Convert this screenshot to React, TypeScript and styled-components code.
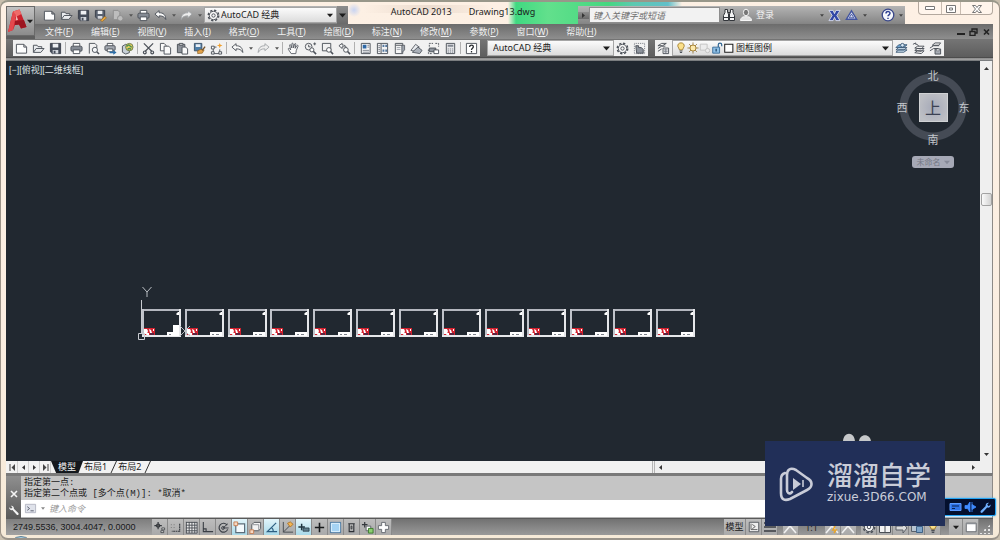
import React from "react";
import styled, { createGlobalStyle, css } from "styled-components";

const ui = `"Noto Sans", "Noto Sans CJK SC", sans-serif`;
const mono = `"Liberation Mono", "Noto Sans CJK SC", monospace`;

const GlobalStyle = createGlobalStyle`
  * { box-sizing: border-box; }
  html, body { margin: 0; padding: 0; }
  body { background: #c9bfae; font-family: ${ui}; font-size: 9px; line-height: 12px; color: #1c1c1c; }
  button, input, select { font: inherit; color: inherit; margin: 0; padding: 0; border: 0; background: none; border-radius: 0; }
  svg { display: block; flex: none; }
`;

/* ---------- icons ---------- */

const K = "#4c5159";
const line = { fill: "none", stroke: K, strokeWidth: 1 };

const glyphs: Record<string, React.ReactNode> = {
  new: <path d="M1.5 2.5h8l3 3v6.500h-11z M9.500 2.500v3h3" fill="#fdfdfd" stroke={K} />,
  open: (
    <g fill="#e9ebee" stroke={K}>
      <path d="M1.500 11V3.500h4l1 1.500h4v2" />
      <path d="M1.500 11.200 4.500 7h8.500L9.500 11.200z" />
    </g>
  ),
  save: (
    <g>
      <path d="M1.500 1.500h11v11h-9l-2-2z" fill="#454c59" stroke="#3a404b" />
      <path d="M4 2h6v4H4z" fill="#eef0f3" />
      <path d="M4 8.500h6v4H4z" fill="#d5d8de" />
      <path d="M5 9.500h2v3H5z" fill="#454c59" />
    </g>
  ),
  saveAs: (
    <g>
      <path d="M1.500 1.500h10v9h-8l-2-2z" fill="#5a6270" stroke="#3a404b" />
      <path d="M4 2h5v3.500H4z" fill="#eef0f3" />
      <path d="M4 7.500h5v3H4z" fill="#d5d8de" />
      <path d="M7 12.500 11.500 8l2 1.500-4.500 4z" fill="#e9a63e" stroke="#93641c" strokeWidth=".6" />
    </g>
  ),
  cloud: (
    <g stroke="#8d8d8d" fill="#bdbdbd">
      <path d="M2.500 1.500h5l2 2v8h-7z" />
      <circle cx="10" cy="10" r="3" />
    </g>
  ),
  print: (
    <g stroke={K}>
      <path d="M3.500 5V1.500h7V5" fill="#fff" />
      <rect x="1" y="4.500" width="12" height="5.500" rx="1.500" fill="#858b94" />
      <path d="M3.500 8.500h7v4h-7z" fill="#fff" />
    </g>
  ),
  preview: (
    <g>
      <path d="M2.500 12.500v-11h6l2 2v3" {...line} />
      <circle cx="8.500" cy="8.500" r="2.800" fill="#f4f6f8" stroke={K} />
      <path d="m10.500 10.500 2.500 2.500" stroke={K} strokeWidth="1.600" />
    </g>
  ),
  publish: (
    <g stroke={K}>
      <path d="M3.500 4V1.500h6V4" fill="#fff" />
      <rect x="1" y="4" width="11" height="5" rx="1" fill="#a3a8b0" />
      <path d="M3.500 7.500h6v3h-6z" fill="#fff" />
      <path d="M6 10.200h4V8.500l3.500 2.700L10 13.800v-1.700H6z" fill="#2c6ea8" stroke="none" />
    </g>
  ),
  globe: (
    <g>
      <path d="M1.500 4.500 5 2.500l4 1v8l-4 1.500-3.500-2z" fill="#c8d0d8" stroke={K} />
      <circle cx="9" cy="5.500" r="4" fill="#e8cf5e" stroke="#6b7a4e" />
      <path d="M6 5q2-3 3.500-1T12 5M7 8q2-2 4 0" fill="none" stroke="#4f9150" strokeWidth="1.400" />
    </g>
  ),
  cut: (
    <g {...line} strokeWidth="1.300">
      <path d="M2 1.500 10.500 10M12 1.500 3.500 10" />
      <circle cx="3" cy="11.200" r="1.500" />
      <circle cx="11" cy="11.200" r="1.500" />
    </g>
  ),
  copy: (
    <g fill="#fafafa" stroke={K}>
      <path d="M1.500 1.500h4l2 2v6h-6z" />
      <path d="M5.500 4.500h5l2 2v6.500h-7z" />
    </g>
  ),
  paste: (
    <g stroke={K}>
      <path d="M1.500 2.500h8v9h-8z" fill="#8b9098" />
      <path d="M3.500 1.500h4v2h-4z" fill="#d9d9d9" />
      <path d="M6.500 5.500h4l2 2v5.500h-6z" fill="#fafafa" />
    </g>
  ),
  match: (
    <g>
      <path d="M1.500 1.500h8v8h-8z" fill="#4e7ea8" stroke="#3b5066" />
      <path d="M3 2.500h5v3H3z" fill="#e8eef4" />
      <path d="M5 9.500 8 8l4 .5-2 3.500-5 .5z" fill="#e2a24a" stroke="#8a5f20" strokeWidth=".7" />
      <path d="m10 9 3-4" stroke="#75532a" strokeWidth="1.500" />
    </g>
  ),
  block: (
    <g>
      <path d="M3 12.500h8M3.500 6v5M10.500 8v3M4 5.500h3" {...line} />
      <path d="M1.500 4.500h3v3h-3zM1.500 10.500h3v2.500h-3zM9.500 10.500h3v2.500h-3z" fill="#fff" stroke={K} />
      <path d="m10.500 1 .8 2 2.200.8-2.200.9-.8 2.100-.8-2.100-2.200-.9 2.200-.8z" fill="#f0a02e" />
    </g>
  ),
  undo: <path d="M1 5.500 5.500 1.800v2.300c4.500-.2 7 2 7.200 7.200C11 8.200 9 7.300 5.500 7.400v2z" fill="#fafafa" stroke={K} />,
  redo: <path d="M13 5.500 8.500 1.800v2.300C4 3.900 1.500 6.100 1.300 11.300 3 8.200 5 7.300 8.500 7.400v2z" fill="#ededed" stroke="#a2a5a9" />,
  hand: (
    <path
      d="M4.500 12.500 1.500 8c-.6-1 .6-1.600 1.300-.8L4 8.500 2.800 3.700c-.2-1 1-1.200 1.300-.3L5.300 6.500 5.200 2c0-1 1.300-1 1.400 0l.5 4.300L8.200 2.200c.3-.9 1.500-.6 1.300.3l-.7 4.300 1.900-2.900c.6-.8 1.600-.1 1.200.7L10 9l-.5 3.500z"
      fill="#fcfcfc" stroke={K} strokeWidth=".9"
    />
  ),
  zoomRt: (
    <g {...line}>
      <circle cx="5" cy="5" r="3.600" />
      <path d="M5 3v2.200h2M10 2h3M11.500.5v3" />
      <circle cx="8.500" cy="8.500" r="2.200" fill="#fff" />
      <path d="m10 10 3 3" strokeWidth="1.700" />
    </g>
  ),
  zoomWin: (
    <g {...line}>
      <path d="M1.500 1.500h9v8h-9z" />
      <circle cx="8.500" cy="8.500" r="2.500" fill="#fff" />
      <path d="m10.300 10.300 2.700 2.700" strokeWidth="1.700" />
    </g>
  ),
  zoomPrev: (
    <g {...line}>
      <path d="M1 4 4.500 1.500v1.800c2.500 0 4 .5 4.500 3-1.500-1.300-2.500-1.300-4.500-1.200V7z" fill="#fff" />
      <circle cx="8.500" cy="8.500" r="2.500" fill="#fff" />
      <path d="m10.300 10.300 2.700 2.700" strokeWidth="1.700" />
    </g>
  ),
  props: (
    <g>
      <path d="M2.500 1.500h9.500v11H2.500z" fill="#f7f7f7" stroke={K} />
      <path d="M4 3h4v4H4z" fill="#2d67a5" />
      <path d="M9 3.500h2M9 5.500h2M4 9h7M4 11h7" stroke="#7a808a" />
    </g>
  ),
  center: (
    <g>
      <path d="M1.500 1.500h11v11h-11z" fill="#f3f3f3" stroke={K} />
      <path d="M5.500 2v10" stroke={K} />
      <path d="M2.500 4h2M2.500 6h2M2.500 8h2M2.500 10h2" stroke="#7a808a" />
      <path d="M7 3h2v2.500H7zM10 3h2v2.500h-2zM7 8h2v2.500H7zM10 8h2v2.500h-2z" fill="#54779e" />
    </g>
  ),
  palette: (
    <g>
      <path d="M2.500 1.500h8v11h-8z" fill="#f5f5f5" stroke={K} />
      <path d="M3 3.500h7" stroke={K} />
      <path d="M9.500 3.500h3v5l-3 3z" fill="#9ea4ad" stroke={K} strokeWidth=".8" />
      <path d="M4 6h4M4 8h4" stroke="#9ea4ad" />
    </g>
  ),
  sheet: (
    <g fill="#e9ebee" stroke={K} strokeWidth=".9">
      <path d="m1 9 5-6.500 4 3L5 10z" />
      <path d="m2.500 11 6-5.500L13 9l-2.500 3.500z" fill="#aab0b8" />
    </g>
  ),
  markup: (
    <g>
      <path d="M2.500 5V1.500h4M9 1.500h3.500V5M1.500 8v4.500H5" {...line} strokeDasharray="2 1" />
      <path d="M2.500 6.500h7v4h-7z" fill="#8e949d" stroke={K} />
      <path d="M7.500 8.500h5v4h-5z" fill="#fff" stroke={K} />
    </g>
  ),
  calc: (
    <g>
      <path d="M2.500 1.500h9v11h-9z" fill="#e5e6e8" stroke={K} />
      <path d="M4 3h6v2H4z" fill="#828892" />
      <path d="M4 7.500h6M4 9.500h6M4 11h6" stroke="#828892" strokeDasharray="1.300 1" />
    </g>
  ),
  help: (
    <g>
      <path d="M1.500 1.500h11v11h-11z" fill="#fff" stroke={K} />
      <path d="M5 5.300C5 2.800 9 2.900 9 5.200 9 6.700 7 6.600 7 8.500M7 9.800v1.400" fill="none" stroke="#25292e" strokeWidth="1.400" />
    </g>
  ),
  gear: (
    <g {...line}>
      <circle cx="7" cy="7" r="5.600" strokeWidth="1.700" strokeDasharray="2.400 2" />
      <circle cx="7" cy="7" r="4.500" fill="#f7f7f7" />
      <circle cx="7" cy="7" r="1.800" />
    </g>
  ),
  wsSave: (
    <g>
      <path d="M1.500 1.500h11v11h-11z" fill="none" stroke="#70757d" strokeDasharray="1 1" />
      <path d="M3 4h3v2h3l2 2v4H4z" fill="#8d939c" stroke={K} />
    </g>
  ),
  layers: (
    <g>
      <path d="m1 4 4-2.500h5L6 4zM1 7l4-2.500h4M1 10l4-2.500" {...line} />
      <path d="M6.500 6.500h6v6h-6z" fill="#f3f3f3" stroke={K} />
      <path d="M7.500 8.500h4M7.500 10.500h4M9.500 7v5" stroke="#7a808a" />
    </g>
  ),
  bulb: (
    <g>
      <path d="M7 1C4.300 1 3 3 3.300 5c.3 1.800 1.700 2.300 1.900 4.200h3.600C9 7.300 10.400 6.800 10.700 5 11 3 9.700 1 7 1z" fill="#fbe08a" stroke="#a07c2c" />
      <path d="M5.300 10.500h3.400M5.700 12.300h2.600" stroke={K} strokeWidth="1.300" />
    </g>
  ),
  sun: (
    <g>
      <path d="M7 .5v13M.5 7h13M2.400 2.400l9.200 9.200M11.600 2.400l-9.200 9.200" stroke="#8f6f30" strokeWidth=".9" />
      <circle cx="7" cy="7" r="3.500" fill="#fce9ad" stroke="#9d7626" />
    </g>
  ),
  vpFreeze: (
    <g fill="#ececec" stroke="#c0c0c0">
      <path d="M1.500 2.500h8v7h-8z" />
      <circle cx="10" cy="10" r="2.500" />
    </g>
  ),
  lock: (
    <g>
      <path d="M8.500 6V3.200c0-2.400 4-2.400 4 0V5" fill="none" stroke="#2f6593" strokeWidth="1.400" />
      <path d="M2 6h8v7H2z" fill="#8fc0e6" stroke="#2f6593" />
      <path d="M6 8v3" stroke="#20486d" strokeWidth="1.500" />
    </g>
  ),
  swatch: <path d="M2 2.500h9.500v9.500H2z" fill="#fff" stroke="#1d1d1d" strokeWidth="1.200" />,
  layerCur: (
    <g stroke="#3f5c78">
      <path d="m1 11 3-2.500h9L9.500 11zM1 8.500 4 6h9L9.500 8.500z" fill="#cfe2f2" />
      <path d="m1 6 3-3h9L9.500 6z" fill="#6ea5d2" />
      <circle cx="8" cy="3.500" r="2" fill="#d7e9f7" />
    </g>
  ),
  layerPrev: (
    <g stroke={K} fill="#f0f0f0">
      <path d="m3 11.500 3-2h7l-3 3zM3 9l3-2h7l-3 3zM3 6.500l3-2h7l-3 3z" />
      <path d="M1 2.500 4 1v1.500c2 0 2.500.5 3 2" fill="none" />
    </g>
  ),
  layerState: (
    <g stroke={K} fill="#f0f0f0">
      <path d="m1 9.500 4-2.500h5M1 6.500 5 4h6M3.500 3.500l3-2.500h6l-2 2.500z" fill="none" />
      <path d="M6.500 7.500h6V13h-6z" fill="#a8adb5" />
      <path d="M8 7.500h3v2H8z" fill="#fff" strokeWidth=".6" />
    </g>
  ),
  binoc: (
    <g fill="#f4f4f4" stroke="#33363b">
      <path d="M3 1.500h2.500v3L6.500 6v6.500h-5V7.500L3 4.500zM8.500 1.500H11v3l1.500 3v5h-5V6l1-1.500z" />
      <path d="M1.500 9.500h5M7.500 9.500h5M6 4.500h2" />
    </g>
  ),
  user: (
    <g fill="#e2e2e2" stroke="#f6f6f6">
      <ellipse cx="7" cy="4.500" rx="2.600" ry="3.300" fill="#777" />
      <path d="M1.500 12.500c0-2.500 2-3.800 4-3.800h3c2 0 4 1.300 4 3.800z" />
    </g>
  ),
  exchange: (
    <g>
      <path d="M1 1.500h4.500L7 5l1.500-3.500H13L9.500 7l3.500 5.500H8.500L7 9l-1.500 3.500H1L4.500 7z" fill="#3348a6" stroke="#dfe3f5" strokeWidth=".9" />
    </g>
  ),
  autodesk: (
    <g fill="none" stroke="#42549f" strokeWidth="1.500">
      <path d="M7 2 12.500 11h-11z" fill="#dde1f0" />
      <path d="m4.500 9.500 2.500-4 2.500 4z" strokeWidth="1" />
    </g>
  ),
  helpRound: (
    <g>
      <circle cx="7" cy="7" r="5.800" fill="#f5f7fb" stroke="#39478a" strokeWidth="1.300" />
      <path d="M5 5.500C5 3 9 3 9 5.300 9 6.800 7 6.800 7 8.300M7 9.700V11" fill="none" stroke="#2f4193" strokeWidth="1.500" />
    </g>
  ),
  wrench: (
    <path d="M1.500 3.700c-.4 2.500 1.600 4 3.700 3.400l5 5.300c1.200 1.300 3-.5 1.800-1.800L6.800 5.500c.4-2-1.300-4-3.500-3.500l1.900 2-1.700 1.600z" fill="#f4f4f4" />
  ),
  prompt: (
    <g>
      <path d="M1.500 2.500h11v9h-11z" fill="#dfe2ea" stroke="#b3b7c2" />
      <path d="m3.500 5 2.500 2-2.500 2M7 9.500h3.500" fill="none" stroke="#555b6c" />
    </g>
  ),
  infer: (
    <g stroke="#33373c">
      <path d="M5.500 1v8M1.500 5h8" strokeWidth="1.300" />
      <path d="M4 3.500h3v3H4z" fill="#555" />
      <path d="M9.500 7.500h3v2h-3zM8.500 10.500h3v2h-3z" fill="#ddd" strokeWidth=".8" />
    </g>
  ),
  snap: (
    <g>
      <path d="M2 4h1M5 4h1M2 7h1M5 7h1" stroke="#777" />
      <path d="M11.500 3v8H3" fill="none" stroke="#35393e" strokeDasharray="2 .6" strokeWidth="1.200" />
    </g>
  ),
  grid: (
    <g>
      <path d="M1 1h12v12H1z" fill="#eceded" />
      <path d="M1.500 1v12M4.500 1v12M7.500 1v12M10.500 1v12M1 1.500h12M1 4.500h12M1 7.500h12M1 10.500h12M13 1v12H1" fill="none" stroke="#4a4e54" />
    </g>
  ),
  ortho: <path d="M2.500 1v10.500H13M2.500 8.500h3v3" fill="none" stroke="#3b3f45" strokeWidth="1.200" />,
  polar: (
    <g fill="none" stroke="#3b3f45">
      <path d="M11 4.500A4.800 4.800 0 1 0 11.500 9" strokeWidth="1.300" />
      <path d="m6.500 7.500 5-4.500M6.500 7.500h6" />
      <circle cx="6.500" cy="7.500" r="1.500" />
    </g>
  ),
  osnap: (
    <g>
      <path d="M3 3h9.500v9.500H3z" fill="#f4fafd" stroke="#5c6d7a" strokeWidth="1.300" />
      <path d="M1 1h4v4H1z" fill="#f6d9c4" stroke="#c77f55" />
    </g>
  ),
  osnap3d: (
    <g>
      <path d="m3 4 2.500-2.500h7V8l-2 2.500H3z" fill="#f3f3f3" stroke="#4f5359" />
      <path d="M10.500 10V4H4" fill="none" stroke="#8b8f95" />
      <path d="M1 9.500h4v4H1z" fill="#f6d9c4" stroke="#c77f55" />
    </g>
  ),
  otrack: <path d="M12 2 2.500 11.500h10.500M7 7c1.500 1 2 2.500 2 4.500" fill="none" stroke="#2d5f82" strokeWidth="1.300" />,
  ducs: (
    <g fill="none" stroke="#44484e">
      <path d="M2.500 1v11H13M2.500 12l7-7" />
      <path d="M7 2.500 10 1l3 2.500L10 6.500z" fill="#f2b553" stroke="#b0762a" />
    </g>
  ),
  dyn: (
    <g stroke="#20343f">
      <path d="M5 3v7M1.500 6.500h7" strokeWidth="1.600" />
      <path d="M6.500 7.500H13V11H6.500z" fill="#5f7d8c" strokeWidth=".8" />
    </g>
  ),
  lwt: <path d="M7 2v10M2 7h10M7 7h5" stroke="#17191b" strokeWidth="1.700" />,
  tpy: (
    <g>
      <path d="M1.500 1.500h11v11h-11z" fill="#a5d3f4" stroke="#3c6c97" />
      <path d="M2.500 2.500h9v9h-9z" fill="none" stroke="#e5f4fd" />
    </g>
  ),
  qp: (
    <g fill="none" stroke="#2d3035">
      <path d="M3.500 3h7M4.500 3v8.500h5V3" strokeWidth="1.200" />
      <path d="M6.500 5.500h1v3h-1z" strokeWidth=".8" />
    </g>
  ),
  cycle: (
    <g>
      <path d="M4 1v6M1 4h6" stroke="#33373c" strokeWidth="1.300" />
      <path d="M5.500 5.500h5v5h-5z" fill="#fff" stroke="#5c6066" />
      <path d="M8 8h5v5H8z" fill="#8cce72" stroke="#3a7a2c" />
    </g>
  ),
  monitor: <path d="M5 1.500h4V5h3.500v4H9v3.500H5V9H1.500V5H5z" fill="#fff" stroke="#666a70" />,
  layoutIn: (
    <g>
      <path d="M1.500 1.500h11v11h-11z" fill="#eee" stroke="#4a4e54" />
      <path d="M3.500 3v7H11M5 4l3.500 2.500L5 9" fill="none" stroke="#555" />
    </g>
  ),
  rows: <path d="M1 3h12M1 7h12M1 11h12" stroke="#3a3d42" strokeWidth="1.500" />,
  anno: (
    <g fill="none" stroke="#f0f0f0" strokeWidth="1.600">
      <path d="M1 13 7 6l6 7M7 1v5" />
    </g>
  ),
  annoAuto: (
    <g fill="none" stroke="#f0f0f0" strokeWidth="1.600">
      <path d="M1 13 7 6l6 7M7 1v5" />
      <path d="M10 6 8 10h3l-2 3" stroke="#e8a52c" />
    </g>
  ),
  tray: (
    <g>
      <path d="M1.500 3.500h11v9h-11z" fill="#f3f3f3" stroke="#4a4e54" />
      <path d="M7 4v9" stroke="#4a4e54" />
    </g>
  ),
  arrowR: <path d="M2 6h7V3l4 5-4 5v-3H2z" fill="#dcdcdc" stroke="#5a5e64" />,
  hardware: (
    <g>
      <path d="M1.500 2.500h9v9h-9z" fill="#b7c4d1" stroke="#59616b" />
      <path d="M6.500 6.500h6v6h-6z" fill="#7fa5c9" stroke="#3f6388" />
    </g>
  ),
  clean: (
    <g>
      <path d="M1.500 2.500h11.500v10H1.500z" fill="#fff" stroke="#5a5e64" />
      <path d="M1.500 3h11.500" stroke="#8a8e94" strokeWidth="1.500" />
    </g>
  ),
};

const Icon = ({ name, size = 14 }: { name: string; size?: number }) => (
  <svg width={size} height={size} viewBox="0 0 14 14" aria-hidden="true">{glyphs[name]}</svg>
);

const Caret = ({ color = "#1c1c1c", w = 7 }: { color?: string; w?: number }) => (
  <svg width={w} height="5" viewBox="0 0 7 5" aria-hidden="true"><path d="M0 .5h7L3.500 4.500z" fill={color} /></svg>
);

type Dir = "up" | "down" | "left" | "right";
const tips: Record<Dir, string> = { up: "M1 5 3.500 2 6 5z", down: "M1 2 3.500 5 6 2z", left: "M5 1 2 3.500 5 6z", right: "M2 1l3 2.500L2 6z" };
const Tip = ({ dir }: { dir: Dir }) => (
  <svg width="7" height="7" viewBox="0 0 7 7" aria-hidden="true"><path d={tips[dir]} fill="#353535" /></svg>
);

/* ---------- window and header ---------- */

const Window = styled.div`
  position: relative;
  min-height: 100vh;
  display: flex;
  flex-direction: column;
  padding: 4px 6px 3px 5px;
  border: 1px solid #9c9388;
  border-top: 2px solid #98978a;
  border-bottom: 2px solid #9a948b;
  border-radius: 8px;
  overflow: hidden;
  background:
    linear-gradient(90deg, rgba(71, 212, 130, 0), #3fd981 8px, #62e08c 40px, #45d780 100px, #5cc9b0 125px, #62bfc9 160px, rgba(110, 190, 205, 0)) 507px 0 / 174px 22px no-repeat,
    radial-gradient(circle, #c9d4f2, rgba(201, 212, 242, 0) 70%) 346px 1px / 14px 14px no-repeat,
    linear-gradient(90deg, rgba(226, 210, 198, 0), #ecdccf, rgba(226, 210, 198, 0)) 362px 3px / 130px 8px no-repeat,
    linear-gradient(#fdf0e4, #fbeee1 60%, #f6ead8);
`;

const Header = styled.header`
  display: grid;
  grid-template-columns: 29px 1fr;
  grid-template-rows: 18px 15px;
`;

const AppCell = styled.div`
  grid-column: 1;
  grid-row: 1 / 3;
  background: #5f5f5f;
`;

const AppButton = styled.button`
  width: 29px;
  height: 30px;
  display: flex;
  align-items: center;
  border: 1px solid #6a6a6a;
  background: linear-gradient(#c2c2c2, #8b8b8b);
`;

const TitleRow = styled.div`
  grid-column: 2;
  grid-row: 1;
  display: flex;
  align-items: stretch;
`;

const QuickBar = styled.div`
  display: flex;
  align-items: center;
  padding-left: 6px;
  background: linear-gradient(#b4b4b4, #848484);
`;

const ToolButton = styled.button<{ $w?: number }>`
  width: ${(p) => p.$w ?? 17}px;
  height: 16px;
  flex: none;
  display: flex;
  align-items: center;
  justify-content: center;
`;

const Divider = styled.span`
  width: 1px;
  height: 12px;
  margin: 0 2px 0 1px;
  flex: none;
  background: #b0b0b0;
`;

const Title = styled.h1`
  flex: 1;
  margin: 0;
  display: flex;
  justify-content: center;
  gap: 17px;
  font-size: 9px;
  font-weight: 400;
  line-height: 12px;
  white-space: nowrap;
`;

const SelectShell = styled.label<{ $w?: number }>`
  display: flex;
  align-items: center;
  width: ${(p) => (p.$w ? `${p.$w}px` : "auto")};
  flex: none;
  height: 16px;
  padding: 0 3px 0 2px;
  border: 1px solid #a5a5a5;
  background: linear-gradient(#fbfbfb, #dcdcdc);
`;

const Select = styled.select<{ $indent?: number }>`
  appearance: none;
  flex: 1;
  min-width: 0;
  height: 14px;
  padding-left: ${(p) => p.$indent ?? 0}px;
  outline: none;
`;

const DarkButton = styled.button`
  width: 11px;
  display: flex;
  align-items: center;
  justify-content: center;
  background: linear-gradient(#8d8d8d, #6a6a6a);
`;

const InfoBar = styled.div`
  width: 327px;
  display: flex;
  align-items: center;
  background: linear-gradient(#b4b4b4, #848484);
`;

const SearchInput = styled.input`
  width: 131px;
  height: 16px;
  padding-left: 3px;
  border: 1px solid #8d8d8d;
  background: #f2f2f2;
  font-style: italic;
  &::placeholder { color: #6f6f6f; opacity: 1; }
`;

const SignIn = styled.button`
  display: flex;
  align-items: center;
  gap: 3px;
  height: 16px;
  margin-left: 2px;
  color: #f2f2f2;
`;

const Spacer = styled.span<{ $w?: number }>`
  flex: ${(p) => (p.$w ? `0 0 ${p.$w}px` : "1")};
`;

const Caption = styled.div`
  width: 88px;
  display: flex;
  justify-content: flex-end;
`;

const CaptionGroup = styled.div`
  width: 75px;
  height: 14px;
  margin-top: -5px;
  display: grid;
  grid-template-columns: 22px 19px 1fr;
  border: 1px solid #b3a89e;
  border-top: 0;
  border-radius: 0 0 4px 4px;
  background: rgba(255, 246, 238, 0.8);
  button { display: flex; align-items: center; justify-content: center; padding-top: 2px; }
  button + button { border-left: 1px solid #c8bcb1; }
`;

const MenuRow = styled.nav`
  grid-column: 2;
  grid-row: 2;
  display: flex;
  align-items: center;
  gap: 18px;
  padding-left: 10px;
  background: linear-gradient(#6c6c6c, #8e8e8e);
  color: #f0f0f0;
  button { height: 13px; white-space: nowrap; }
`;

const DocButtons = styled.div`
  margin-left: auto;
  display: flex;
  button { width: 13px; display: flex; align-items: center; justify-content: center; }
`;

const ToolRow = styled.div`
  display: flex;
  gap: 7px;
  padding: 1px 0 1px 7px;
  background: linear-gradient(#757575, #5d5d5d);
  border-bottom: 1px solid #4c4c4c;
`;

const ToolBar = styled.div`
  display: flex;
  align-items: center;
  height: 16px;
  background: #f1f1f1;
`;

const Ridge = styled.div`
  height: 3px;
  background: linear-gradient(#8b8b8b, #a3a3a3 60%, #5e6266);
`;

/* ---------- drawing area ---------- */

const Workspace = styled.main`
  flex: 1;
  display: flex;
  min-height: 320px;
`;

const Canvas = styled.section`
  position: relative;
  flex: 1;
  background: #212830;
  overflow: hidden;
`;

const ViewLabel = styled.div`
  padding: 3px;
  color: #dfe2e5;
  font-family: "Liberation Sans", "Noto Sans CJK SC", sans-serif;
`;

const Drawing = styled.svg`
  position: absolute;
  left: 0;
  top: 0;
`;

const ViewCube = styled.div`
  position: absolute;
  top: 6px;
  right: 9px;
  width: 76px;
  display: grid;
  justify-items: center;
  row-gap: 9px;
`;

const Ring = styled.div`
  width: 76px;
  height: 80px;
  display: grid;
  grid-template-columns: 14px 1fr 14px;
  grid-template-rows: 16px 1fr 16px;
  place-items: center;
  font-family: "Noto Sans CJK SC", sans-serif;
  font-size: 11px;
  line-height: 14px;
  color: #c3c7cc;
  background: radial-gradient(circle, transparent 25px, #454b55 26px, #454b55 33px, transparent 34px);
  span:first-child, span:last-child { grid-column: 1 / 4; }
`;

const Face = styled.button`
  width: 29px;
  height: 29px;
  border: 1px solid #d0d2d4;
  background: radial-gradient(#a5a9b8, #bdbfc4 80%);
  color: #3b4152;
  font-family: "Noto Sans CJK SC", sans-serif;
  font-size: 16px;
  line-height: 24px;
`;

const UcsButton = styled.button`
  width: 42px;
  height: 12px;
  display: flex;
  align-items: center;
  justify-content: center;
  gap: 3px;
  border-radius: 3px;
  background: #a6a9b6;
  color: #747885;
  font-size: 8px;
  line-height: 10px;
`;

const VScroll = styled.div`
  width: 13px;
  display: flex;
  flex-direction: column;
  align-items: center;
  padding: 3px 0;
  background: #efefef;
  border-right: 1px solid #8d8a87;
  button { height: 8px; }
`;

const VTrack = styled.div`
  flex: 1;
  width: 11px;
  display: grid;
  grid-template-rows: 121fr 13px 243fr;
`;

const Thumb = styled.div`
  grid-row: 2;
  border: 1px solid #a2a2a2;
  border-radius: 2px;
  background: linear-gradient(90deg, #fafafa, #d2d2d2);
`;

const TabRow = styled.div`
  display: flex;
  align-items: stretch;
  height: 12px;
  background: #f2f2f2;
`;

const TabNav = styled.div`
  display: flex;
  padding-left: 1px;
  button { width: 11px; display: flex; align-items: center; justify-content: center; border-right: 1px solid #cfcfcf; }
`;

const Tab = styled.button<{ $on?: boolean }>`
  display: flex;
  align-items: center;
  height: 12px;
  white-space: nowrap;
  ${(p) => p.$on
    ? css`width: 32px; justify-content: center; background: #14181d; color: #f3f3f3; clip-path: polygon(0 0, 100% 0, 86% 100%, 16% 100%);`
    : css`padding-left: 1px; gap: 3px;`}
`;

const HScroll = styled.div`
  width: 341px;
  margin-left: auto;
  display: flex;
  align-items: center;
  justify-content: space-between;
  padding: 0 15px 0 1px;
  border-left: 3px double #b5b5b5;
  border-right: 1px solid #8d8a87;
  background: #efefef;
  button { width: 8px; display: flex; justify-content: center; }
`;

/* ---------- command line ---------- */

const Command = styled.section`
  display: grid;
  grid-template-columns: 15px 1fr;
  border-top: 3px solid #7a7a7a;
  border-right: 1px solid #8d8a87;
`;

const Rail = styled.div`
  display: flex;
  flex-direction: column;
  align-items: center;
  justify-content: space-between;
  padding: 3px 0 2px;
  background: linear-gradient(#8f8f8f, #5a5a5a);
  button { display: flex; }
`;

const Grip = styled.span`
  width: 11px;
  height: 5px;
  background: radial-gradient(circle, #c2c2c2 40%, transparent 50%) 0 0 / 2px 2px;
`;

const History = styled.div`
  height: 24px;
  padding: 2px 3px 0;
  background: #c5c5c5;
  font-family: ${mono};
  line-height: 11px;
  p { margin: 0; }
`;

const Prompt = styled.label`
  display: flex;
  align-items: center;
  gap: 4px;
  height: 18px;
  padding-left: 3px;
  background: #fff;
  border-bottom: 1px solid #b5b5b5;
`;

const CommandInput = styled.input`
  flex: 1;
  height: 14px;
  outline: none;
  font-style: italic;
  &::placeholder { color: #9a9a9a; opacity: 1; }
`;

/* ---------- status bar ---------- */

const Status = styled.footer`
  display: flex;
  align-items: stretch;
  height: 17px;
  border-top: 1px solid #5a5a5a;
  background: linear-gradient(#727272, #999);
`;

const Coords = styled.output`
  width: 146px;
  padding: 2px 0 0 7px;
  font-family: "Liberation Sans", sans-serif;
  line-height: 13px;
  color: #17191b;
  background: linear-gradient(#7e7e7e, #a2a2a2);
`;

const Toggle = styled.button<{ $on?: boolean; $w?: number }>`
  width: ${(p) => p.$w ?? 16}px;
  flex: none;
  display: flex;
  align-items: center;
  justify-content: center;
  border-right: 1px solid #8a8a8a;
  background: ${(p) => (p.$on ? "linear-gradient(#e2f4fa, #a9d9e8)" : "linear-gradient(#bdbdbd, #a9a9a9)")};
`;

const StatusRight = styled.div`
  width: 269px;
  margin-left: auto;
  display: flex;
  align-items: stretch;
`;

const Scale = styled.button`
  width: 26px;
  padding-top: 1px;
  color: #222;
`;

const Corner = styled.span`
  width: 12px;
  margin: 5px 2px 1px auto;
  background: radial-gradient(circle, #e6e6e6 35%, transparent 50%) 0 0 / 4px 4px;
  clip-path: polygon(100% 0, 100% 100%, 0 100%);
`;

/* ---------- overlays ---------- */

const Ears = styled.svg`
  position: absolute;
  right: 127px;
  bottom: 96px;
`;

const Banner = styled.aside`
  position: absolute;
  right: 54px;
  bottom: 12px;
  width: 180px;
  height: 85px;
  display: flex;
  align-items: center;
  gap: 12px;
  padding-left: 14px;
  background: #212f58;
  color: #c9ccd8;
`;

const BannerText = styled.div`
  display: grid;
  grid-template-rows: 26px 14px;
`;

const BannerName = styled.div`
  font-family: "Noto Sans CJK SC", sans-serif;
  font-size: 26px;
  font-weight: 500;
  line-height: 20px;
`;

const BannerSite = styled.div`
  font-family: "DejaVu Sans", sans-serif;
  font-size: 12px;
  line-height: 14px;
`;

const Dock = styled.div`
  position: absolute;
  right: 3px;
  bottom: 22px;
  width: 60px;
  height: 18px;
  display: flex;
  align-items: center;
  justify-content: flex-end;
  gap: 2px;
  padding-right: 3px;
  border: 1px solid #23a4f4;
  border-radius: 2px;
  background: #04102e;
  box-shadow: 0 0 2px #39b4ff;
`;

const Orb = styled.span`
  position: absolute;
  left: 7px;
  bottom: -24px;
  width: 26px;
  height: 26px;
  border-radius: 50%;
  border: 1px solid #5d7f96;
  background: #a9cfe2;
`;

/* ---------- data ---------- */

const menus: [string, string][] = [
  ["文件", "F"], ["编辑", "E"], ["视图", "V"], ["插入", "I"], ["格式", "O"], ["工具", "T"],
  ["绘图", "D"], ["标注", "N"], ["修改", "M"], ["参数", "P"], ["窗口", "W"], ["帮助", "H"],
];

const quick = ["new", "open", "save", "saveAs", "cloud", ".", "print", "undo", ".", "redo", "."];
const standard = [
  "new", "open", "save", "|", "print", "preview", "publish", "globe", "|", "cut", "copy", "paste", "match", "block", "|",
  "undo", ".", "redo", ".", "|", "hand", "zoomRt", "zoomWin", "zoomPrev", "|",
  "props", "center", "palette", "sheet", "markup", "calc", "|", "help",
];
const toggles = ["infer", "snap", "grid", "ortho", "polar", "osnap", "osnap3d", "otrack", "ducs", "dyn", "lwt", "tpy", "qp", "cycle", "monitor"];
const active = ["osnap", "otrack", "dyn"];

const Tools = ({ items }: { items: string[] }) => (
  <>
    {items.map((n, i) =>
      n === "|" ? <Divider key={i} /> :
      n === "." ? <ToolButton key={i} $w={9} aria-label="更多"><Caret w={4} color="#555" /></ToolButton> :
      <ToolButton key={i} aria-label={n}><Icon name={n} size={13} /></ToolButton>
    )}
  </>
);

const sheets = Array.from({ length: 13 }, (_, i) => Math.round(136 + i * 42.83));

const Sheet = ({ x }: { x: number }) => (
  <g transform={`translate(${x} 247)`}>
    <path d="M0 2h39" stroke="#b4b7bf" strokeWidth="2" />
    <path d="M1 1v27" stroke="#c0c3ca" strokeWidth="2" />
    <path d="M38 1v27M0 28h39" stroke="#e6e7ea" strokeWidth="2" />
    <path d="M34 6l2-2h1v3h-2z" fill="#fff" />
    <path d="M2 20h11v7H2z" fill="#d3222f" />
    <path d="M2 21h3l1 2-1 3H2zM7 21l2 1 1 3H8zM11 21h1v2h-1zM5 25h2v2H4z" fill="#fff" />
    <path d="M8 25h4v2H8z" fill="#5b2440" />
    <path d="M25 24h12v4H25z" fill="#fff" />
    <path d="M27 26.500h2M31 26.500h3" stroke="#7c818a" />
  </g>
);

export default function App() {
  return (
    <>
      <GlobalStyle />
      <Window>
        <Header>
          <AppCell>
            <AppButton aria-label="应用程序菜单">
              <svg width="20" height="26" viewBox="0 0 20 26" aria-hidden="true">
                <path d="M1 24 6 3.500 12.500 1.500 19.500 19l-5.500 1.500-2-4-4 .5-2 5z" fill="#c9202b" />
                <path d="M6 3.500l6.500-2 2 4.500-6 3z" fill="#ef6b69" />
                <path d="M1 24 6 3.500 9 7 6 22z" fill="#e4494d" />
                <path d="m9.500 7.500 1.500 4.500-2.500.5z" fill="#f0b9b7" />
                <path d="m8 13 9-1 2.500 7-5.500 1.500-2-4-4 .5z" fill="#9c1520" />
              </svg>
              <Caret w={6} />
            </AppButton>
          </AppCell>
          <TitleRow>
            <QuickBar>
              <Tools items={quick} />
              <SelectShell $w={133}>
                <Icon name="gear" size={13} />
                <Select aria-label="工作空间" $indent={1}><option>AutoCAD 经典</option></Select>
                <Caret w={6} />
              </SelectShell>
            </QuickBar>
            <DarkButton aria-label="自定义"><Caret /></DarkButton>
            <Title><span>AutoCAD 2013</span><span>Drawing13.dwg</span></Title>
            <InfoBar>
              <DarkButton aria-label="展开"><Tip dir="right" /></DarkButton>
              <SearchInput aria-label="搜索" placeholder="键入关键字或短语" />
              <ToolButton aria-label="查找"><Icon name="binoc" /></ToolButton>
              <SignIn><Icon name="user" /><span>登录</span></SignIn>
              <Spacer />
              <ToolButton $w={9} aria-label="更多"><Caret w={4} color="#444" /></ToolButton>
              <ToolButton aria-label="Exchange"><Icon name="exchange" size={13} /></ToolButton>
              <ToolButton aria-label="Autodesk"><Icon name="autodesk" size={13} /></ToolButton>
              <ToolButton $w={9} aria-label="更多"><Caret w={4} color="#444" /></ToolButton>
              <Spacer $w={10} />
              <ToolButton aria-label="帮助"><Icon name="helpRound" /></ToolButton>
              <ToolButton $w={9} aria-label="更多"><Caret w={4} color="#444" /></ToolButton>
            </InfoBar>
            <Caption>
              <CaptionGroup>
                <button aria-label="最小化"><svg width="10" height="5"><path d="M.5.500h9v3h-9z" fill="#fff" stroke="#777" /></svg></button>
                <button aria-label="还原"><svg width="10" height="8"><path d="M.5.500h9v7h-9zM3.500 3h3v2h-3z" fill="#fff" stroke="#777" /></svg></button>
                <button aria-label="关闭"><svg width="10" height="8"><path d="M.5.500h3L5 2.500 6.500.500h3L6.500 4l3 3.500h-3L5 5.500 3.500 7.500h-3l3-3.500z" fill="#fff" stroke="#777" /></svg></button>
              </CaptionGroup>
            </Caption>
          </TitleRow>
          <MenuRow>
            {menus.map(([t, k]) => <button key={k}>{t}(<u>{k}</u>)</button>)}
            <DocButtons>
              <button aria-label="最小化文档"><svg width="8" height="8"><path d="M0 6h8" stroke="#222" strokeWidth="2" /></svg></button>
              <button aria-label="还原文档"><svg width="9" height="8"><path d="M3 3V1h5v4H6M1 3.500h5v4H1z" fill="none" stroke="#222" strokeWidth="1.400" /></svg></button>
              <button aria-label="关闭文档"><svg width="7" height="8"><path d="m1 1.500 5 5M6 1.500l-5 5" stroke="#222" strokeWidth="1.700" /></svg></button>
            </DocButtons>
          </MenuRow>
        </Header>

        <ToolRow>
          <ToolBar><Tools items={standard} /></ToolBar>
          <ToolBar>
            <SelectShell $w={127}>
              <Select aria-label="工作空间" $indent={3}><option>AutoCAD 经典</option></Select>
              <Caret />
            </SelectShell>
            <Tools items={["gear", "wsSave"]} />
          </ToolBar>
          <ToolBar>
            <Tools items={["layers"]} />
            <SelectShell $w={221}>
              {["bulb", "sun", "vpFreeze", "lock", "swatch"].map((n) => <Icon key={n} name={n} size={12} />)}
              <Select aria-label="图层" $indent={1}><option>图框图例</option></Select>
              <Caret />
            </SelectShell>
            <Tools items={["layerCur", "layerPrev", "layerState"]} />
          </ToolBar>
        </ToolRow>
        <Ridge />

        <Workspace>
          <Canvas>
            <Drawing width="100%" height="100%" aria-hidden="true">
              {sheets.map((x) => <Sheet key={x} x={x} />)}
              <path d="M167 264h6v10h-6z" fill="#fff" />
              <path d="M135.500 239v33M132.500 272.500h6v6h-6z" fill="none" stroke="#c9ccd1" />
              <path d="M136.500 226l4.500 5 4.500-5M141 231v5M174 265l10 10M184 265l-10 10" fill="none" stroke="#b9bdc2" />
            </Drawing>
            <ViewLabel>[−][俯视][二维线框]</ViewLabel>
            <ViewCube>
              <Ring>
                <span>北</span><span>西</span><Face>上</Face><span>东</span><span>南</span>
              </Ring>
              <UcsButton>未命名<Caret w={6} color="#858997" /></UcsButton>
            </ViewCube>
          </Canvas>
          <VScroll>
            <button aria-label="向上"><Tip dir="up" /></button>
            <VTrack><Thumb /></VTrack>
            <button aria-label="向下"><Tip dir="down" /></button>
          </VScroll>
        </Workspace>

        <TabRow>
          <TabNav>
            <button aria-label="首个"><svg width="7" height="7"><path d="M1 0v7" stroke="#454545" /><path d="M6 0 2.500 3.500 6 7z" fill="#454545" /></svg></button>
            <button aria-label="上一个"><Tip dir="left" /></button>
            <button aria-label="下一个"><Tip dir="right" /></button>
            <button aria-label="末个"><svg width="7" height="7"><path d="M6 0v7" stroke="#454545" /><path d="m1 0 3.500 3.500L1 7z" fill="#454545" /></svg></button>
          </TabNav>
          <Tab $on>模型</Tab>
          {["布局1", "布局2"].map((t) => (
            <Tab key={t}>{t}<svg width="7" height="12"><path d="M6.500 0 1 12" stroke="#333" fill="none" /></svg></Tab>
          ))}
          <HScroll>
            <button aria-label="向左"><Tip dir="left" /></button>
            <button aria-label="向右"><Tip dir="right" /></button>
          </HScroll>
        </TabRow>

        <Command>
          <Rail>
            <Grip />
            <button aria-label="关闭"><svg width="8" height="8"><path d="m1 1 6 6M7 1 1 7" stroke="#f4f4f4" strokeWidth="1.600" /></svg></button>
            <button aria-label="自定义"><Icon name="wrench" size={12} /></button>
          </Rail>
          <div>
            <History>
              <p>指定第一点:</p>
              <p>指定第二个点或 [多个点(M)]: *取消*</p>
            </History>
            <Prompt>
              <Icon name="prompt" size={13} />
              <Caret w={4} color="#888" />
              <CommandInput aria-label="命令" placeholder="键入命令" />
            </Prompt>
          </div>
        </Command>

        <Status>
          <Coords>2749.5536, 3004.4047, 0.0000</Coords>
          {toggles.map((n) => (
            <Toggle key={n} $on={active.includes(n)} aria-pressed={active.includes(n)} aria-label={n}><Icon name={n} size={13} /></Toggle>
          ))}
          <StatusRight>
            <Toggle $w={22}>模型</Toggle>
            <Toggle aria-label="布局"><Icon name="layoutIn" size={12} /></Toggle>
            <Toggle aria-label="快速查看"><Icon name="rows" /></Toggle>
            <Spacer />
            <Toggle aria-label="注释比例"><Icon name="anno" /></Toggle>
            <Scale>1:1</Scale>
            <Toggle aria-label="注释可见性"><Icon name="annoAuto" /></Toggle>
            <Toggle aria-label="自动缩放"><Icon name="anno" /></Toggle>
            <Spacer />
            <Toggle aria-label="切换工作空间"><Icon name="gear" /></Toggle>
            <Toggle aria-label="锁定"><Icon name="tray" /></Toggle>
            <Toggle aria-label="显示"><Icon name="arrowR" /></Toggle>
            <Toggle aria-label="硬件加速"><Icon name="hardware" /></Toggle>
            <Toggle aria-label="隔离对象"><Icon name="bulb" /></Toggle>
            <Spacer $w={8} />
            <Toggle $w={14} aria-label="更多"><Caret w={6} /></Toggle>
            <Toggle aria-label="全屏显示"><Icon name="clean" size={12} /></Toggle>
            <Corner />
          </StatusRight>
        </Status>

        <Orb />
        <Dock>
          <svg width="13" height="10" viewBox="0 0 13 10" aria-hidden="true"><path d="M1 1.500h11v7H1z" fill="#2f74e8" stroke="#5d9bff" /><path d="M3 4h7M3 6.500h3" stroke="#0a2050" /></svg>
          <svg width="13" height="12" viewBox="0 0 13 12" aria-hidden="true"><path d="M1 4.500h2.500L6 1v10L3.500 7.500H1zM8 1v10M8 3.500 12 6 8 8.500z" fill="#3f8cff" stroke="#3f8cff" strokeWidth=".8" /></svg>
          <svg width="13" height="13" viewBox="0 0 14 14" aria-hidden="true"><path d="M12.500 3.700c.4 2.500-1.600 4-3.700 3.400l-5 5.300c-1.200 1.300-3-.5-1.800-1.800l5.200-5.100c-.4-2 1.300-4 3.500-3.500l-1.900 2 1.700 1.600z" fill="#6fb0ff" /></svg>
        </Dock>
        <Ears width="30" height="9" viewBox="0 0 30 9" aria-hidden="true">
          <path d="M1 9C1-2 13-2 13 9zM17 9c0-9 12-9 12 0z" fill="#c6c8ca" />
        </Ears>
        <Banner>
          <svg width="36" height="36" viewBox="0 0 36 36" fill="none" stroke="#c9ccd8" aria-hidden="true">
            <path d="M6 7c-3 1-4 3-4 6v14c0 7 4 8 9 6l17-9c6-3 6-9 0-12L17 4C11 1 8 4 8 9v15c0 3 2 4 4 3l1-1" strokeWidth="2.600" strokeLinecap="round" />
            <path d="M14 12v12l8-6z" fill="#c9ccd8" stroke="none" />
            <path d="M24 14v7" strokeWidth="1.600" />
          </svg>
          <BannerText>
            <BannerName>溜溜自学</BannerName>
            <BannerSite>zixue.3D66.COM</BannerSite>
          </BannerText>
        </Banner>
      </Window>
    </>
  );
}
